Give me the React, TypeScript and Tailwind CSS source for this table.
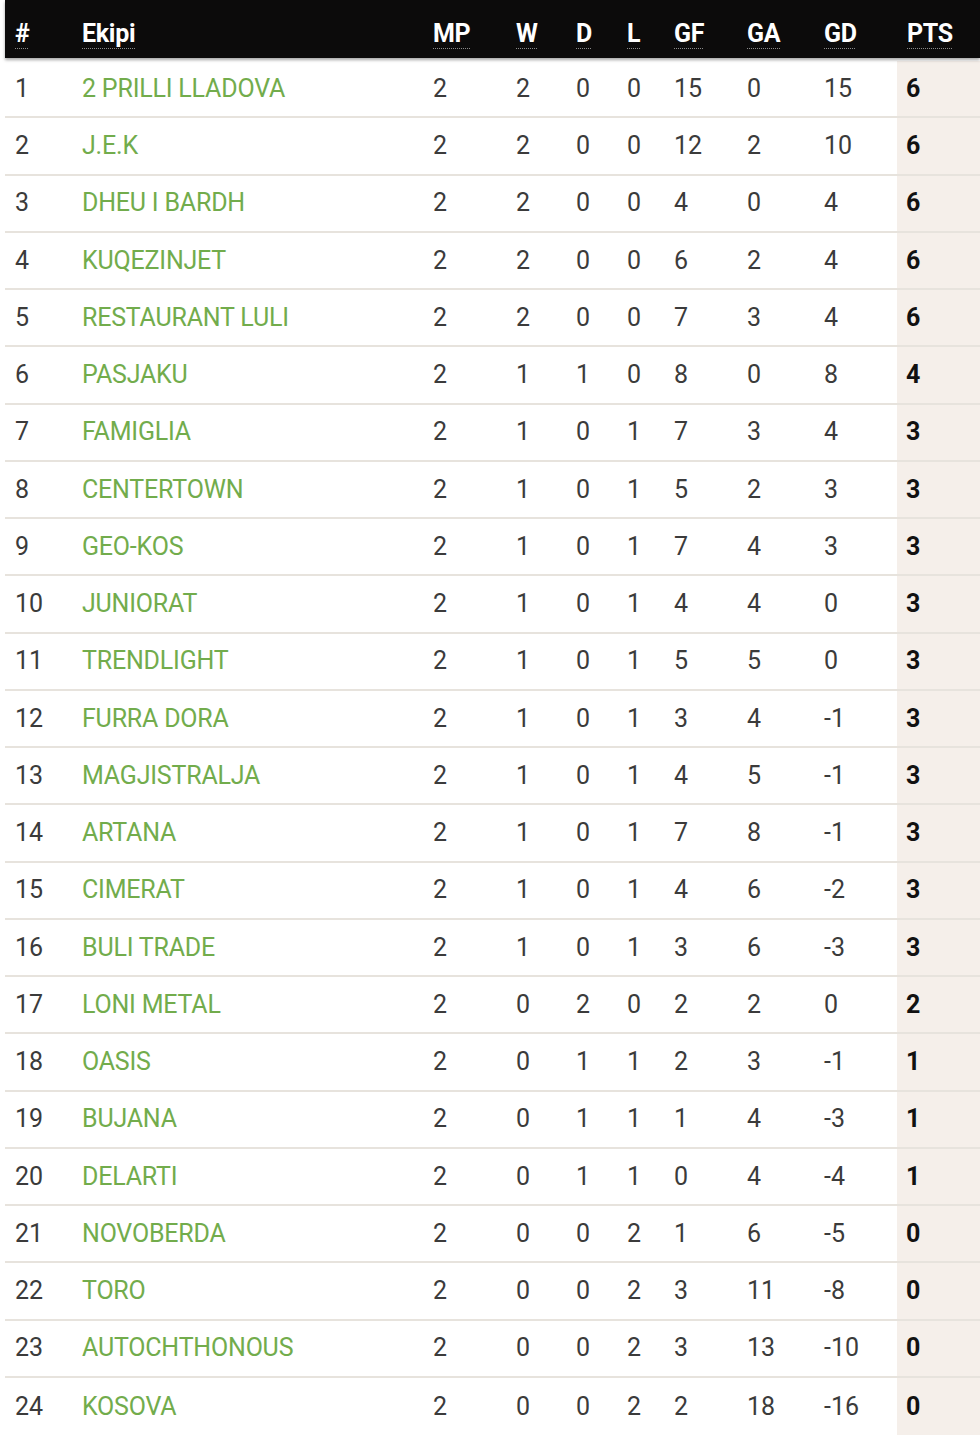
const rows: [number, string, number, number, number, number, number, number, number, number][] = [
  [1, '2 PRILLI LLADOVA', 2, 2, 0, 0, 15, 0, 15, 6],
  [2, 'J.E.K', 2, 2, 0, 0, 12, 2, 10, 6],
  [3, 'DHEU I BARDH', 2, 2, 0, 0, 4, 0, 4, 6],
  [4, 'KUQEZINJET', 2, 2, 0, 0, 6, 2, 4, 6],
  [5, 'RESTAURANT LULI', 2, 2, 0, 0, 7, 3, 4, 6],
  [6, 'PASJAKU', 2, 1, 1, 0, 8, 0, 8, 4],
  [7, 'FAMIGLIA', 2, 1, 0, 1, 7, 3, 4, 3],
  [8, 'CENTERTOWN', 2, 1, 0, 1, 5, 2, 3, 3],
  [9, 'GEO-KOS', 2, 1, 0, 1, 7, 4, 3, 3],
  [10, 'JUNIORAT', 2, 1, 0, 1, 4, 4, 0, 3],
  [11, 'TRENDLIGHT', 2, 1, 0, 1, 5, 5, 0, 3],
  [12, 'FURRA DORA', 2, 1, 0, 1, 3, 4, -1, 3],
  [13, 'MAGJISTRALJA', 2, 1, 0, 1, 4, 5, -1, 3],
  [14, 'ARTANA', 2, 1, 0, 1, 7, 8, -1, 3],
  [15, 'CIMERAT', 2, 1, 0, 1, 4, 6, -2, 3],
  [16, 'BULI TRADE', 2, 1, 0, 1, 3, 6, -3, 3],
  [17, 'LONI METAL', 2, 0, 2, 0, 2, 2, 0, 2],
  [18, 'OASIS', 2, 0, 1, 1, 2, 3, -1, 1],
  [19, 'BUJANA', 2, 0, 1, 1, 1, 4, -3, 1],
  [20, 'DELARTI', 2, 0, 1, 1, 0, 4, -4, 1],
  [21, 'NOVOBERDA', 2, 0, 0, 2, 1, 6, -5, 0],
  [22, 'TORO', 2, 0, 0, 2, 3, 11, -8, 0],
  [23, 'AUTOCHTHONOUS', 2, 0, 0, 2, 3, 13, -10, 0],
  [24, 'KOSOVA', 2, 0, 0, 2, 2, 18, -16, 0],
];

// column widths, left padding 10px in every cell
const cols = ['w-[67px]', 'w-[351px]', 'w-[83px]', 'w-[60px]', 'w-[51px]', 'w-[47px]', 'w-[73px]', 'w-[77px]', 'w-[83px]'];
const heads = ['#', 'Ekipi', 'MP', 'W', 'D', 'L', 'GF', 'GA', 'GD'];

export default function App() {
  return (
    <div className="w-[980px] h-[1441px] bg-white pl-[5px] font-['Roboto',sans-serif]">
      <div className="flex h-[58px] items-center pt-[9px] bg-[#0c0b0b] text-white text-[25px] font-bold tracking-[-0.3px] shadow-[0_2px_3px_rgba(0,0,0,0.35)] relative z-10">
        {heads.map((h, i) => (
          <div key={h} className={`${cols[i]} shrink-0 pl-[10px]`}>
            <span className="underline decoration-dotted decoration-[#8a8a8a] decoration-1 underline-offset-[6px]">{h}</span>
          </div>
        ))}
        <div className="flex-1 pl-[10px]">
          <span className="underline decoration-dotted decoration-[#8a8a8a] decoration-1 underline-offset-[6px]">PTS</span>
        </div>
      </div>

      <div className="pt-[3px]">
        {rows.map((r, idx) => (
          <div
            key={r[0]}
            className={`flex h-[57.25px] items-stretch text-[25px] text-[#3b3b3b] ${idx < rows.length - 1 ? 'border-b-2 border-[#e7e3dd]' : ''}`}
          >
            {r.slice(0, 9).map((v, i) => (
              <div
                key={i}
                className={`${cols[i]} shrink-0 flex items-center pl-[10px] ${i === 1 ? 'text-[#72ac4c] tracking-[-0.2px]' : ''}`}
              >
                {v}
              </div>
            ))}
            <div className="flex-1 flex items-center pl-[9px] bg-[#f5efea] font-bold text-[#111]">{r[9]}</div>
          </div>
        ))}
      </div>
    </div>
  );
}
